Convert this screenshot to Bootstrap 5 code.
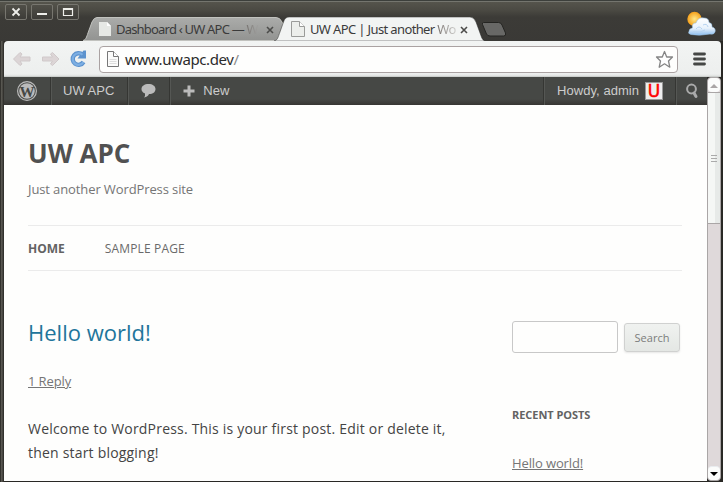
<!DOCTYPE html>
<html lang="en">
<head>
<meta charset="utf-8">
<title>UW APC | Just another WordPress site</title>
<link href="https://cdn.jsdelivr.net/npm/bootstrap@5.3.0/dist/css/bootstrap.min.css" rel="stylesheet">
<style>
html, body { height: 100%; }
body { overflow: hidden; background: #3c3b37; font-family: "Open Sans", "Noto Sans", sans-serif; }
svg { display: block; flex: none; }
.window { width: 723px; height: 482px; padding: 0 2px 1px 4px; background: linear-gradient(90deg, #33322e 0, #33322e 1px, #5a5953 1px, #55544e 2px, #3c3b37 3px, #292825 4px, #292825 100%); }
.titlebar { height: 41px; margin: 0 -2px 0 -4px; padding-left: 5px; background: linear-gradient(#3c3f3b 0, #3c3f3b 1px, #74756e 1px, #74756e 2px, #55544c 2px, #4b4a43 10px, #3c3b37 17px, #3a3936 100%); }
.winbtn { width: 22px; height: 16px; margin: 4px 4px 0 0; border: 1px solid #77766f; border-radius: 2px; background: linear-gradient(#504f48, #3d3c38); }
.tab { height: 24px; margin-top: 17px; font: 13px/24px "Noto Sans", sans-serif; color: #3b3b3b; }
.tab-shape { position: absolute; left: 0; top: 0; z-index: 0; }
.tab > :not(.tab-shape) { position: relative; z-index: 1; }
.tab-one { width: 203px; padding-left: 15px; }
.tab-two { width: 211px; margin-left: -12px; padding-left: 17px; z-index: 2; }
.tab-title { white-space: nowrap; height: 24px; margin-left: 4px; }
.tab-one .tab-title { width: 149px; letter-spacing: -.8px; }
.tab-two .tab-title { width: 149px; letter-spacing: -.63px; margin-left: 5px; }
.fade-out { color: transparent; background: linear-gradient(90deg, #77706c, #d0d0ce); -webkit-background-clip: text; background-clip: text; }
.tab-one .fade-out { background-image: linear-gradient(90deg, #75716e, #a0a09e); }
.newtab { margin-left: -4px; }
.toolbar { height: 36px; padding: 0 11px 0 8px; background: linear-gradient(#f2f4f3, #edefee 33px, #dfe2e0 35px, #b9bcb9 36px); border-radius: 4px 4px 0 0; }
.address { width: 579px; height: 27px; margin-left: 5px; padding: 0 3px 0 7px; border: 1px solid #aaa2a2; border-radius: 4px; background: #fefefd; font: 15px/25px "Noto Sans", sans-serif; color: #2b2b2b; }
.address-text { letter-spacing: -.4px; margin-left: 6px; }
.slash { color: #8c8c8c; }
.adminbar { height: 28px; background: linear-gradient(#464845 0, #464845 22px, #373633 28px); color: #ccc; font: 13px/28px "Liberation Sans", Arial, sans-serif; }
.ab-item { height: 28px; border-right: 1px solid #353633; box-shadow: 1px 0 #555754; }
.ab-right { height: 28px; border-left: 1px solid #555754; box-shadow: -1px 0 #353633; }
.ab-pad { padding: 0 13px 0 12px; }
.howdy { margin-right: 6px; letter-spacing: .04px; }
.avatar { width: 18px; height: 18px; border: 1px solid #999; background: #eee; color: #f00; font: 17px/16px "DejaVu Sans", sans-serif; text-align: center; -webkit-text-stroke: .5px #f00; }
.page { width: 703px; background: #fefefd; height: 376px; }
.inner { padding: 0 25px 0 24px; }
.site-title { font-size: 26px; line-height: 31px; font-weight: 700; color: #515151; margin: 0; padding-top: 33px; }
.tagline { font-size: 13px; line-height: 20px; color: #757575; margin: 10px 0 0; letter-spacing: -.11px; }
.site-nav { margin-top: 26px; height: 46px; border-top: 1px solid #ebebeb; border-bottom: 1px solid #ebebeb; gap: 40px; font-size: 12px; line-height: 45px; color: #6a6a6a; letter-spacing: .15px; }
.site-nav b { color: #636363; letter-spacing: 0; }
.post { width: 484px; }
.post-title { font-size: 22px; line-height: 28px; font-weight: 400; color: #21759b; margin: 47px 0 0; }
.reply { font-size: 13px; line-height: 20px; color: #757575; margin-top: 25px; letter-spacing: -.1px; }
.body-text { font-size: 14px; line-height: 24px; color: #444; margin: 26px 0 0; letter-spacing: .2px; }
.side { width: 170px; padding-top: 50px; }
.search-field { width: 106px; height: 32px; padding: 4px; border: 1px solid #c8c8c8; border-radius: 3px; background: #fefefd; }
.search-btn { width: 56px; height: 29px; margin: 2px 0 0 6px; padding: 0; border: 1px solid #d0d1d0; border-radius: 3px; background: linear-gradient(#f0f2f0, #e4e7e4); box-shadow: 0 1px 2px rgba(64,64,64,.12); color: #7c7c7c; font-size: 11px; line-height: 27px; }
.side-title { font-size: 11px; line-height: 20px; font-weight: 700; color: #636363; margin: 52px 0 0; letter-spacing: -.05px; }
.side-link { font-size: 13px; line-height: 20px; color: #757575; margin-top: 28px; letter-spacing: -.12px; }
.scroll { width: 14px; background: #dfd9da; border: 1px solid #aaa6a6; border-radius: 4px; }
.scroll-btn { height: 14px; background: #fbfcfb; border-radius: 4px; }
.scroll-thumb { height: 132px; background: linear-gradient(90deg, #f5f7f5 0, #f5f7f5 55%, #e7eae8 60%); border-top: 1px solid #aaa6a6; border-bottom: 1px solid #aaa6a6; }
</style>
<script src="https://cdn.jsdelivr.net/npm/bootstrap@5.3.0/dist/js/bootstrap.bundle.min.js"></script>
</head>
<body>
<div class="window d-flex flex-column">
  <header class="titlebar d-flex align-items-start">
    <div class="winbtn"><svg width="20" height="14"><path d="M6.500 3.500l7 7M13.500 3.500l-7 7" stroke="#eeeeea" stroke-width="1.800"/></svg></div>
    <div class="winbtn"><svg width="20" height="14"><path d="M5 9h10" stroke="#eeeeea" stroke-width="2"/></svg></div>
    <div class="winbtn"><svg width="20" height="14"><path d="M5.500 3.500h9v7h-9z" fill="none" stroke="#eeeeea" stroke-width="1.200"/><path d="M5 4h10" stroke="#eeeeea" stroke-width="2"/></svg></div>
    <div class="tab tab-one position-relative d-flex align-items-center">
      <svg class="tab-shape" width="203" height="24"><defs><linearGradient id="g1" x2="0" y2="1"><stop stop-color="#abacaa"/><stop offset="1" stop-color="#929391"/></linearGradient></defs><path d="M0 23.500C3 23 3.500 20 5 16L9 5Q11 .5 14 .5H193Q197 .5 199 5L200.500 9L194 23.500Z" fill="url(#g1)" stroke="#c1c2be" stroke-width="1"/></svg>
      <svg width="14" height="16"><path d="M1 1h8l4 4v10H1z" fill="#e6e8e5"/><path d="M9 1v4h4z" fill="#fff"/></svg>
      <div class="tab-title">Dashboard ‹ UW APC — <span class="fade-out">W</span></div>
      <svg width="10" height="24"><path d="M2 10l6 6M8 10l-6 6" stroke="#4c4c4a" stroke-width="1.600"/></svg>
    </div>
    <div class="tab tab-two position-relative d-flex align-items-center">
      <svg class="tab-shape" width="211" height="24"><path d="M0 24C4 23 4 20 6 15L9.500 5Q11 0 15 0H196Q200 0 202 5L206 16C207.500 20 208 23 211 24Z" fill="#f2f4f3" stroke="#2b2b28" stroke-width=".5"/></svg>
      <svg width="14" height="16"><path d="M.5.500h8l5 5v10H.5z" fill="#eceeeb" stroke="#9a9b99"/><path d="M8.500.500v5h5" fill="#fff" stroke="#9a9b99"/></svg>
      <div class="tab-title">UW APC | Just another <span class="fade-out">Wo</span></div>
      <svg width="10" height="24"><path d="M2 10l6 6M8 10l-6 6" stroke="#4c4c4a" stroke-width="1.600"/></svg>
    </div>
    <svg class="newtab" width="27" height="41"><path d="M2.500 22.500H17.500Q20 22.500 21 25L24.500 33Q25.500 36 22.500 36H9Q6.500 36 5.500 34L1.500 24.500Q1 22.500 2.500 22.500Z" fill="#686866" stroke="#252522"/></svg>
    <svg class="ms-auto" width="37" height="41" viewBox="0 0 37 41"><defs><radialGradient id="sun"><stop stop-color="#ffe98a"/><stop offset="1" stop-color="#f5a01a"/></radialGradient><linearGradient id="cl" x2="0" y2="1"><stop stop-color="#fff"/><stop offset=".6" stop-color="#e8f2fc"/><stop offset="1" stop-color="#8dbdee"/></linearGradient></defs><circle cx="8.500" cy="19" r="7.200" fill="url(#sun)"/><path d="M5 34.500Q1.500 33.500 3 31.500Q3 28.500 6.500 28Q5.500 23 10 23Q12 17 18 18Q23 18 23 22.500Q26.500 23 26 27Q30 28 29 32Q28 35 24 34Q14 36 5 34.500Z" fill="url(#cl)" stroke="#9cc4ea" stroke-width=".6"/><path d="M10 29q3-4 6 0M17 25q4-2 5 2M7 32q8 1 12-2" fill="none" stroke="#b5d3f1"/></svg>
  </header>

  <div class="toolbar d-flex align-items-center">
    <svg width="20" height="16"><path d="M1.500 8L8 1.500L10 3L8 6H18V10H8L10 13L8 14.500Z" fill="#dcd5d6" stroke="#d0c9ca" stroke-linejoin="round"/></svg>
    <svg class="ms-2" width="20" height="16"><path d="M19 8L12.500 1.500L10.500 3L12.500 6H2.500V10H12.500L10.500 13L12.500 14.500Z" fill="#dcd5d6" stroke="#d0c9ca" stroke-linejoin="round"/></svg>
    <svg class="ms-2 me-1" width="22" height="18"><path d="M14.500 4.800A5.800 5.800 0 1 0 15.500 12" fill="none" stroke="#5d93ce" stroke-width="4.400"/><path d="M9.500 8.500H18V.5H15.500Z" fill="#5d93ce"/><path d="M14.500 4.800A5.800 5.800 0 1 0 15.500 12" fill="none" stroke="#7dafe3" stroke-width="2.200"/></svg>
    <div class="address d-flex align-items-center">
      <svg width="12" height="16"><path d="M.5.500h6l5 5v10H.5z" fill="#fbfbfa" stroke="#777"/><path d="M6.500.500v5h5" fill="#fff" stroke="#777"/><path d="M2.500 8.500h7M2.500 10.500h7M2.500 12.500h7" stroke="#ddd"/></svg>
      <span class="address-text">www.uwapc.dev<span class="slash">/</span></span>
      <svg class="ms-auto" width="19" height="19"><path d="M9.500 1.500L11.700 7H17.500L13.500 11L14.800 17.200L9.500 13.800L4.200 17.200L5.500 11L1.500 7H7.300Z" fill="#fff" stroke="#858585" stroke-width="1.300" stroke-linejoin="round"/></svg>
    </div>
    <svg class="ms-auto me-1" width="13" height="14"><path d="M1.500 2h10M1.500 7h10M1.500 12h10" stroke="#454745" stroke-width="2.800" stroke-linecap="round"/></svg>
  </div>

  <div class="d-flex">
    <main>
      <nav class="adminbar d-flex">
        <div class="ab-item d-flex align-items-center ps-2"><svg class="ms-1 me-2" width="26" height="22" viewBox="0 0 26 22"><circle cx="11" cy="11" r="9.400" fill="none" stroke="#bbb" stroke-width="1.200"/><circle cx="11" cy="11" r="7.800" fill="#bbb"/><text x="11" y="16.500" text-anchor="middle" font-family="Liberation Serif, serif" font-weight="700" font-size="15" fill="#464845">W</text></svg></div>
        <div class="ab-item ab-pad">UW APC</div>
        <div class="ab-item d-flex align-items-center ab-pad"><svg width="16" height="16"><path d="M8.500 1C4.500 1 1.500 3 1.500 6S4 10 5 10.500Q5.500 13 4 14.500Q8 13.500 9 11C13 11 15.500 9 15.500 6S12.500 1 8.500 1Z" fill="#bbb"/></svg></div>
        <div class="d-flex align-items-center ab-pad"><svg width="13" height="12"><path d="M7 .5v11M1.500 6h11" stroke="#bbb" stroke-width="3"/></svg><span class="ms-2">New</span></div>
        <div class="ab-right d-flex align-items-center ms-auto ab-pad"><span class="howdy">Howdy, admin</span><div class="avatar">U</div></div>
        <div class="ab-right d-flex align-items-center px-1"><svg class="mx-1" width="14" height="16"><circle cx="6.500" cy="6" r="4.400" fill="none" stroke="#aaa" stroke-width="2"/><path d="M9 10l2 3.500" stroke="#aaa" stroke-width="3" stroke-linecap="round"/></svg></div>
      </nav>
      <div class="page">
        <div class="inner">
          <h1 class="site-title">UW APC</h1>
          <p class="tagline">Just another WordPress site</p>
          <nav class="site-nav d-flex"><b>HOME</b><span>SAMPLE PAGE</span></nav>
          <div class="d-flex">
            <article class="post">
              <h2 class="post-title">Hello world!</h2>
              <div class="reply text-decoration-underline">1 Reply</div>
              <p class="body-text">Welcome to WordPress. This is your first post. Edit or delete it,<br>then start blogging!</p>
            </article>
            <aside class="side">
              <form class="d-flex align-items-start"><input class="search-field" type="text" aria-label="Search"><button class="search-btn" type="button">Search</button></form>
              <h3 class="side-title">RECENT POSTS</h3>
              <div class="side-link text-decoration-underline">Hello world!</div>
            </aside>
          </div>
        </div>
      </div>
    </main>
    <div class="scroll d-flex flex-column">
      <div class="scroll-btn"><svg width="12" height="14"><path d="M2 10l4-4 4 4z" fill="#aaa6a6"/></svg></div>
      <div class="scroll-thumb d-flex align-items-center justify-content-center"><svg width="6" height="9"><path d="M0 1.500h6M0 4.500h6M0 7.500h6" stroke="#aaa"/></svg></div>
      <div class="scroll-btn mt-auto border-top border-secondary-subtle"><svg width="12" height="13"><path d="M2 5h8l-4 4z" fill="#000"/></svg></div>
    </div>
  </div>
</div>
</body>
</html>
